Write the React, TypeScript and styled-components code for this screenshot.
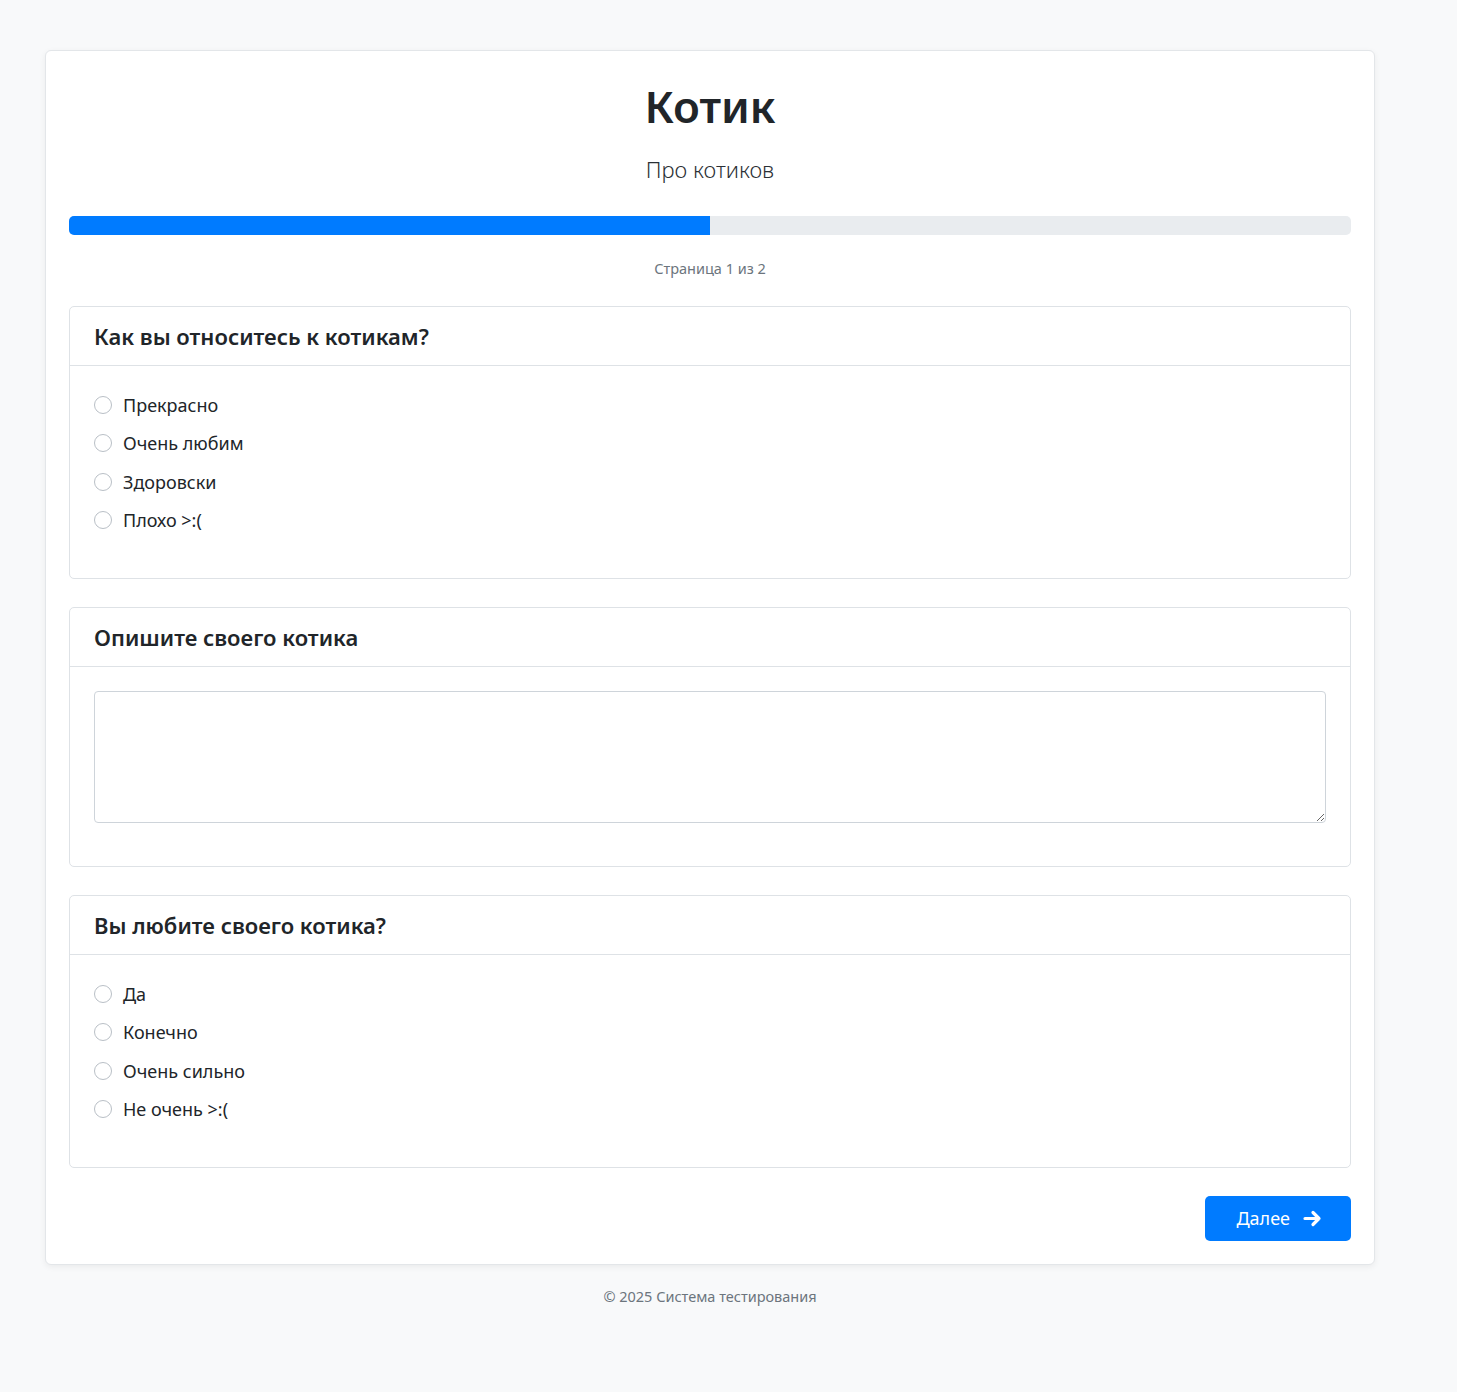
import { FC } from 'react'
import styled, { createGlobalStyle } from 'styled-components'

const Global = createGlobalStyle`
  html, body {
    margin: 0;
    padding: 0;
    background: #f8f9fa;
    color: #212529;
    font-family: "Noto Sans", "Open Sans", sans-serif;
  }
  * { box-sizing: border-box; }
`

const Page = styled.div`
  padding: 50px 0 0 45px;
  min-height: 1392px;
`

const Sheet = styled.main`
  width: 1330px;
  background: #fff;
  border: 1px solid #e3e6e9;
  border-radius: 6px;
  box-shadow: 0 2px 6px rgba(0, 0, 0, 0.06);
  padding: 24px 23px 23px;
`

const Title = styled.h1`
  margin: 0;
  text-align: center;
  font-size: 44px;
  font-weight: 600;
  line-height: 1.2;
  padding-top: 5px;
`

const Lead = styled.p`
  margin: 21px 0 0;
  text-align: center;
  font-size: 22px;
  font-weight: 300;
  color: #2b3035;
  line-height: 1.4;
`

const Track = styled.div`
  margin-top: 31px;
  height: 19px;
  background: #e9ecef;
  border-radius: 5px;
  overflow: hidden;
`

const Fill = styled.div`
  height: 100%;
  background: #007bff;
`

const PageNote = styled.div`
  margin: 23px 0 28px;
  text-align: center;
  font-size: 14.5px;
  color: #6c757d;
`

const Question = styled.section`
  border: 1px solid #dee2e6;
  border-radius: 5px;
  margin-bottom: 28px;
`

const QHead = styled.header`
  padding: 0 24px;
  height: 59px;
  display: flex;
  align-items: center;
  border-bottom: 1px solid #dee2e6;
  font-size: 22px;
  font-weight: 600;
`

const QBody = styled.div<{ $text?: boolean }>`
  padding: ${p => (p.$text ? '24px 24px 43px' : '26px 24px 44px')};
  display: flex;
  flex-direction: column;
  gap: 12px;
`

const Option = styled.label`
  display: flex;
  align-items: center;
  gap: 11px;
  font-size: 18px;
  line-height: 26.5px;
  cursor: pointer;
`

const Radio = styled.input`
  appearance: none;
  margin: 0;
  width: 18px;
  height: 18px;
  border: 1px solid #b9bfc6;
  border-radius: 50%;
  background: #fff;
  flex: none;
`

const Area = styled.textarea`
  display: block;
  width: 100%;
  height: 132px;
  border: 1px solid #ced4da;
  border-radius: 4px;
  font-family: inherit;
  font-size: 16px;
  padding: 8px 12px;
  resize: vertical;
`

const Actions = styled.div`
  display: flex;
  justify-content: flex-end;
`

const NextBtn = styled.button`
  display: flex;
  align-items: center;
  gap: 13px;
  height: 45px;
  padding: 0 29px 0 31px;
  background: #007bff;
  color: #fff;
  border: none;
  border-radius: 5px;
  font-family: inherit;
  font-size: 18px;
  cursor: pointer;
`

const Footer = styled.footer`
  width: 1330px;
  text-align: center;
  margin-top: 21px;
  font-size: 14.5px;
  color: #6c757d;
`

type Q = { title: string; options?: string[] }

const questions: Q[] = [
  { title: 'Как вы относитесь к котикам?', options: ['Прекрасно', 'Очень любим', 'Здоровски', 'Плохо >:('] },
  { title: 'Опишите своего котика' },
  { title: 'Вы любите своего котика?', options: ['Да', 'Конечно', 'Очень сильно', 'Не очень >:('] },
]

const Arrow: FC = () => (
  <svg width="19" height="17" viewBox="0 0 19 17" fill="none">
    <path d="M2 8.5h14M10 2.5l6 6-6 6" stroke="#fff" strokeWidth="3.2" strokeLinecap="round" strokeLinejoin="round" />
  </svg>
)

const App: FC = () => {
  const progress = 50
  return (
    <Page>
      <Global />
      <Sheet>
        <Title>Котик</Title>
        <Lead>Про котиков</Lead>
        <Track>
          <Fill style={{ width: `${progress}%` }} />
        </Track>
        <PageNote>Страница 1 из 2</PageNote>
        {questions.map((q, i) => (
          <Question key={i}>
            <QHead>{q.title}</QHead>
            {q.options ? (
              <QBody>
                {q.options.map(o => (
                  <Option key={o}>
                    <Radio type="radio" name={`q${i}`} />
                    {o}
                  </Option>
                ))}
              </QBody>
            ) : (
              <QBody $text>
                <Area />
              </QBody>
            )}
          </Question>
        ))}
        <Actions>
          <NextBtn>
            Далее <Arrow />
          </NextBtn>
        </Actions>
      </Sheet>
      <Footer>© 2025 Система тестирования</Footer>
    </Page>
  )
}

export default App
